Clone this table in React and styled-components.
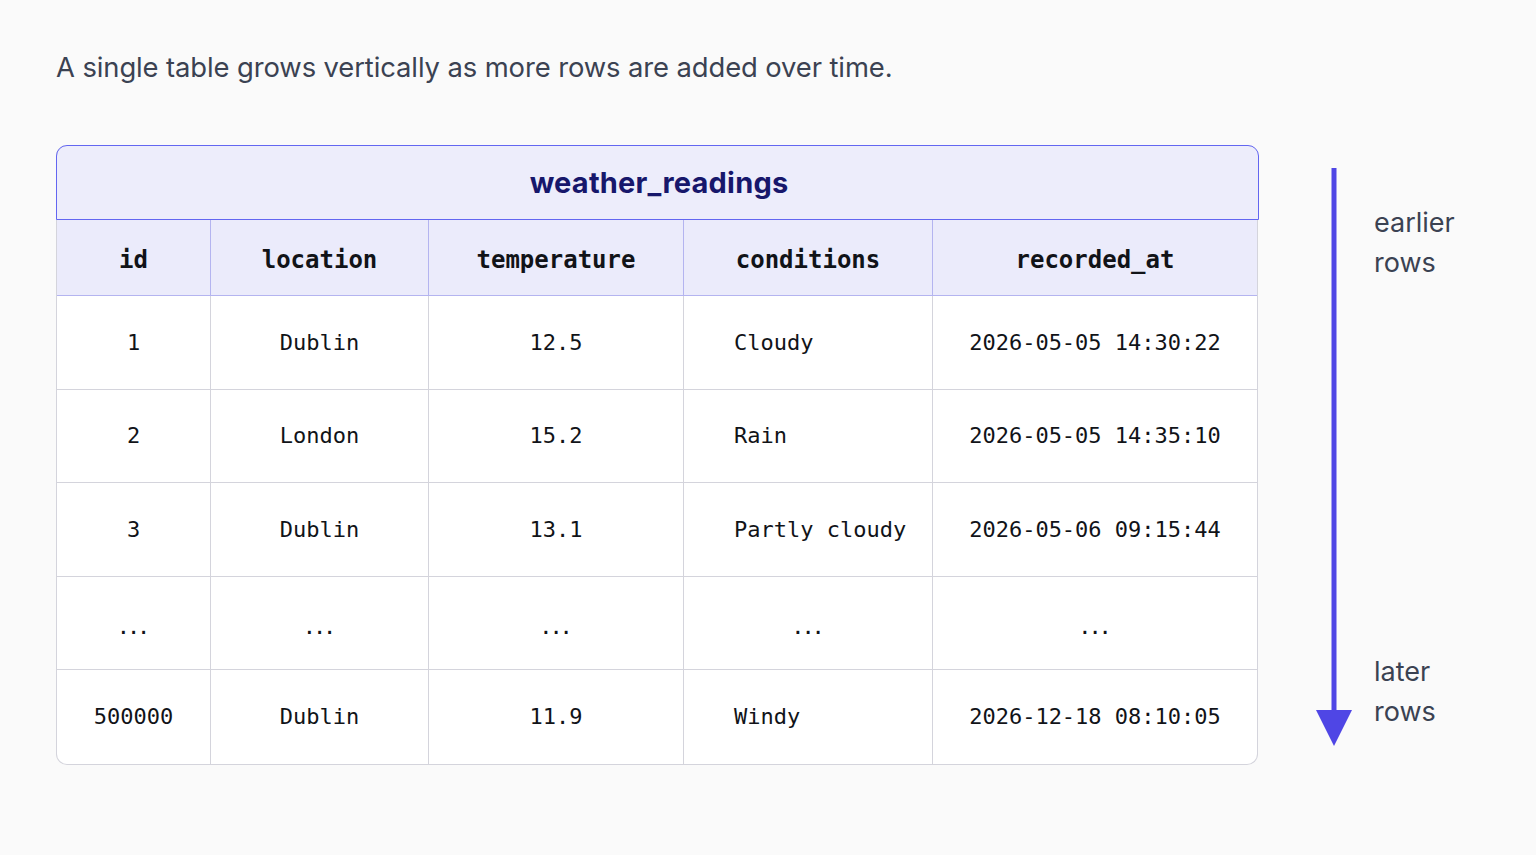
import React from 'react'
import styled, { createGlobalStyle } from 'styled-components'

const GlobalStyle = createGlobalStyle`
  body {
    margin: 0;
    background: #fafafa;
    font-family: Inter, "Noto Sans", sans-serif;
  }
`

const Page = styled.div`
  padding: 48px 56px 0 56px;
`

const Caption = styled.p`
  margin: 0;
  font-size: 27.4px;
  line-height: 38px;
  color: #3b4252;
  letter-spacing: -0.1px;
`

const Main = styled.div`
  display: flex;
  margin-top: 59px;
`

const Table = styled.div`
  width: 1202px;
  display: grid;
  grid-template-columns: 154px 218px 255px 249px 1fr;
  grid-template-rows: 75px 76px repeat(5, 93.5px);
  border: 1.5px solid #d4d4dc;
  border-top: none;
  border-radius: 11px;
  background: #ffffff;
  box-sizing: border-box;
`

const Title = styled.div`
  grid-column: 1 / -1;
  margin: 0 -1.5px;
  padding-left: 4px;
  display: flex;
  align-items: center;
  justify-content: center;
  background: #ededfb;
  border: 1.5px solid #6366f1;
  border-radius: 11px 11px 0 0;
  font-size: 29px;
  font-weight: 700;
  color: #17176b;
  letter-spacing: 0.2px;
`

const Cell = styled.div`
  display: flex;
  align-items: center;
  justify-content: ${p => (p.$left ? 'flex-start' : 'center')};
  padding-left: ${p => (p.$left ? '50px' : '0')};
  font-family: "DejaVu Sans Mono", "Liberation Mono", monospace;
  color: #111318;
  border-right: ${p => (p.$last ? 'none' : '1.5px solid #d4d4dc')};
  border-bottom: ${p => (p.$bottom ? 'none' : '1.5px solid #d4d4dc')};
  font-size: 22px;
`

const HeadCell = styled(Cell)`
  background: #ebebfb;
  font-size: 24px;
  font-weight: 700;
  padding-top: 5px;
  box-sizing: border-box;
  border-right: ${p => (p.$last ? 'none' : '1.5px solid #b4b4f0')};
  border-bottom: 1.5px solid #b4b4f0;
`

const Dots = styled.span`
  font-size: 17px;
  font-weight: 700;
  padding-top: 10px;
`

const Flow = styled.div`
  display: flex;
  margin-left: 58px;
  padding-top: 23px;
`

const Labels = styled.div`
  display: flex;
  flex-direction: column;
  justify-content: space-between;
  margin-left: 22px;
  padding: 35px 0 14px;
  height: 578px;
  box-sizing: border-box;
`

const Label = styled.div`
  font-size: 27px;
  line-height: 40px;
  color: #3b4252;
`

const columns = ['id', 'location', 'temperature', 'conditions', 'recorded_at']

const rows = [
  ['1', 'Dublin', '12.5', 'Cloudy', '2026-05-05 14:30:22'],
  ['2', 'London', '15.2', 'Rain', '2026-05-05 14:35:10'],
  ['3', 'Dublin', '13.1', 'Partly cloudy', '2026-05-06 09:15:44'],
  ['...', '...', '...', '...', '...'],
  ['500000', 'Dublin', '11.9', 'Windy', '2026-12-18 08:10:05'],
]

function Arrow() {
  return (
    <svg width="36" height="578" viewBox="0 0 36 578">
      <rect x="15.5" y="0" width="5" height="548" fill="#4f46e5" />
      <polygon points="0,542 36,542 18,578" fill="#4f46e5" />
    </svg>
  )
}

export default function App() {
  return (
    <Page>
      <GlobalStyle />
      <Caption>A single table grows vertically as more rows are added over time.</Caption>
      <Main>
        <Table>
          <Title>weather_readings</Title>
          {columns.map((c, i) => (
            <HeadCell key={c} $last={i === columns.length - 1}>{c}</HeadCell>
          ))}
          {rows.map((r, ri) =>
            r.map((v, ci) => {
              const dots = v === '...'
              return (
                <Cell
                  key={ri + '-' + ci}
                  $left={ci === 3 && !dots}
                  $last={ci === r.length - 1}
                  $bottom={ri === rows.length - 1}
                >
                  {dots ? <Dots>...</Dots> : v}
                </Cell>
              )
            })
          )}
        </Table>
        <Flow>
          <Arrow />
          <Labels>
            <Label>earlier<br />rows</Label>
            <Label>later<br />rows</Label>
          </Labels>
        </Flow>
      </Main>
    </Page>
  )
}
